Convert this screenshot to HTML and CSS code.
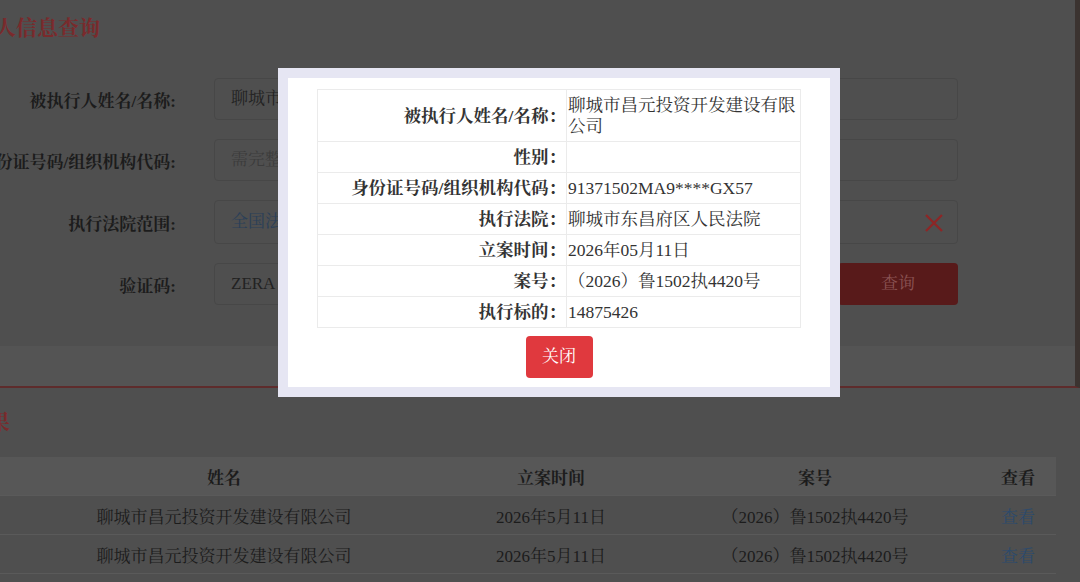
FILE: index.html
```html
<!DOCTYPE html>
<html>
<head>
  <meta charset="utf-8">
  <title>被执行人信息查询</title>
  <link rel="stylesheet" href="styles.css">
</head>
<body>
  <div class="page">
    <div class="query-panel">
      <h2 class="title">被执行人信息查询</h2>
      <div class="form">
        <div class="row">
          <label>被执行人姓名/名称:</label>
          <div class="input">聊城市昌元投资开发建设有限公司</div>
        </div>
        <div class="row">
          <label>身份证号码/组织机构代码:</label>
          <div class="input placeholder">需完整填写身份证号码或组织机构代码</div>
        </div>
        <div class="row">
          <label>执行法院范围:</label>
          <div class="input select">全国法院（包含地方各级法院）
            <svg class="clear" width="20" height="20" viewBox="0 0 20 20"><path d="M2 2L18 18M18 2L2 18" stroke="#8e2626" stroke-width="2.2" fill="none"/></svg>
          </div>
        </div>
        <div class="row">
          <label>验证码:</label>
          <div class="input">ZERA</div>
          <div class="btn-query">查询</div>
        </div>
      </div>
      <div class="panel-foot"></div>
    </div>

    <h2 class="title result-title">查询结果</h2>
    <table class="result">
      <thead>
        <tr><th class="c-name">姓名</th><th class="c-date">立案时间</th><th class="c-no">案号</th><th class="c-view">查看</th></tr>
      </thead>
      <tbody>
        <tr><td>聊城市昌元投资开发建设有限公司</td><td>2026年5月11日</td><td>（2026）鲁1502执4420号</td><td><a class="link">查看</a></td></tr>
        <tr><td>聊城市昌元投资开发建设有限公司</td><td>2026年5月11日</td><td>（2026）鲁1502执4420号</td><td><a class="link">查看</a></td></tr>
      </tbody>
    </table>
  </div>

  <div class="modal">
    <table class="detail">
      <tr><th>被执行人姓名/名称：</th><td>聊城市昌元投资开发建设有限公司</td></tr>
      <tr><th>性别：</th><td></td></tr>
      <tr><th>身份证号码/组织机构代码：</th><td>91371502MA9****GX57</td></tr>
      <tr><th>执行法院：</th><td>聊城市东昌府区人民法院</td></tr>
      <tr><th>立案时间：</th><td>2026年05月11日</td></tr>
      <tr><th>案号：</th><td>（2026）鲁1502执4420号</td></tr>
      <tr><th>执行标的：</th><td>14875426</td></tr>
    </table>
    <div class="actions"><div class="btn-close">关闭</div></div>
  </div>
</body>
</html>
```

FILE: styles.css
```css
html, body { margin: 0; padding: 0; }
body {
  width: 1080px; height: 582px; overflow: hidden; position: relative;
  background: #4f4f4f; color: #1c1c1c;
  font-family: "Liberation Serif", "Noto Serif CJK SC", "Noto Sans CJK SC", serif;
}

/* page behind the mask, shown dimmed */
.page { margin-left: -68px; width: 1148px; }
.query-panel { border-right: 5px solid #3b3330; border-bottom: 2px solid #5e2c2c; }
.title { margin: 0; padding: 14px 0 0; height: 30px; font-size: 21px; line-height: 28px; color: #7a2a2c; font-weight: bold; }
.form { padding: 34px 0 41px; display: flex; flex-direction: column; gap: 19px; }
.row { display: flex; align-items: center; }
.row label { width: 244px; text-align: right; font-size: 17px; font-weight: bold; color: #1c1c1c; margin-right: 38px; white-space: nowrap; }
.input {
  flex: 0 0 744px; box-sizing: border-box; height: 42px; line-height: 40px;
  border: 1px solid #474747; border-radius: 4px; padding: 0 16px;
  font-size: 17px; color: #222; white-space: nowrap; overflow: hidden; position: relative;
}
.row:nth-child(3) .input { height: 44px; line-height: 42px; }
.placeholder { color: #3c3c3c; }
.select { color: #2b3f58; }
.clear { position: absolute; right: 13px; top: 12px; }
.row:last-child .input { flex-basis: 606px; }
.btn-query {
  margin-left: 18px; width: 120px; height: 42px; line-height: 42px; text-align: center;
  background: #581a1a; border-radius: 4px; color: #8a5252; font-size: 17px;
}
.panel-foot { height: 40px; background: #545454; }

.result-title { padding-top: 20px; height: 49px; margin-left: -6px; }
.result { margin-left: 64px; width: 1060px; border-collapse: collapse; font-size: 17px; }
.result th, .result td { text-align: center; height: 38px; padding: 0; border-bottom: 1px solid #5a5a5a; }
.result thead th { background: #575757; font-weight: bold; }
.c-name { width: 456px; } .c-date { width: 198px; } .c-no { width: 330px; } .c-view { width: 76px; }
.link { color: #2c4a6c; }

/* detail dialog */
.modal {
  position: absolute; left: 278px; top: 68px; width: 562px; height: 329px; box-sizing: border-box;
  border: 10px solid #e6e6f3; background: #fff; padding: 11px 29px 0;
}
.detail { width: 484px; border-collapse: collapse; font-size: 17.5px; color: #333; }
.detail th, .detail td { border: 1px solid #ebebeb; padding: 5px 2px 4px; line-height: 21px; vertical-align: middle; }
.detail th { width: 246px; text-align: right; font-weight: bold; padding-right: 0; }
.detail td { text-align: left; padding-left: 1px; }
.actions { display: flex; justify-content: center; padding-top: 8px; }
.btn-close {
  width: 67px; height: 42px; line-height: 42px; text-align: center;
  background: #e0393e; color: #fff; font-size: 17px; border-radius: 4px;
}
```
